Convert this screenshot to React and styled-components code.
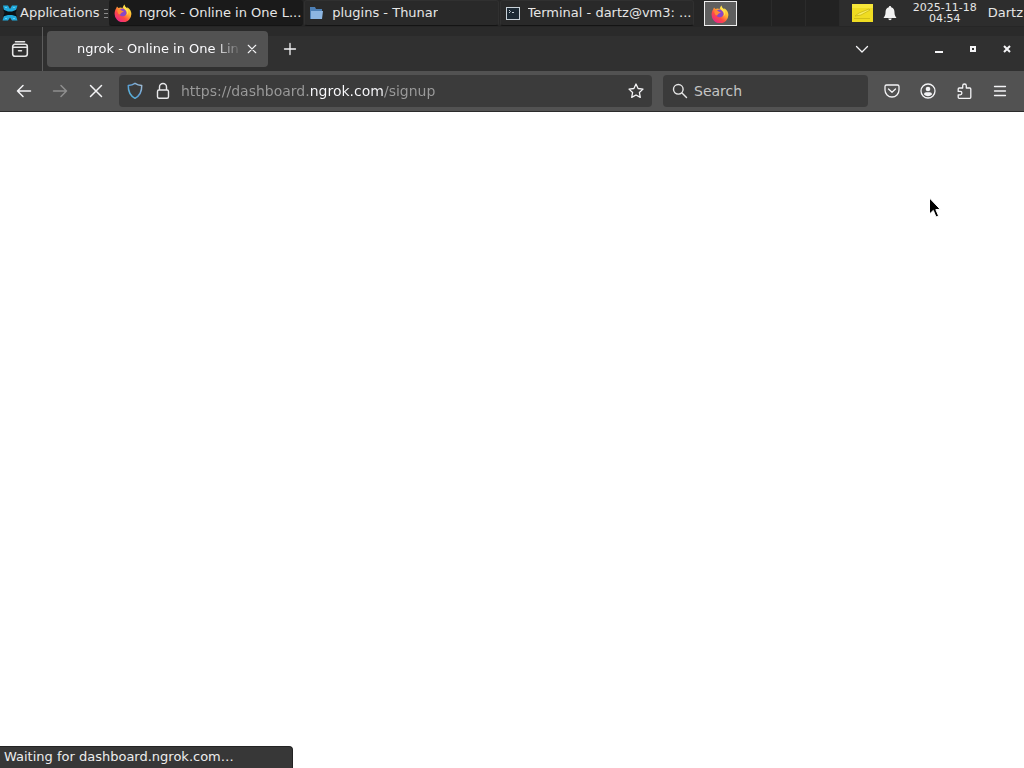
import React, { useId, useState } from 'react';
import styled, { createGlobalStyle, css } from 'styled-components';

const GlobalStyle = createGlobalStyle`
  *, *::before, *::after { box-sizing: border-box; }
  body { margin: 0; background: #fff; }
  button, input { font: inherit; color: inherit; }
`;

const Desktop = styled.div`
  display: flex;
  flex-direction: column;
  min-height: 100vh;
  overflow: hidden;
  font-family: 'DejaVu Sans', sans-serif;
  font-size: 13px;
  line-height: 16px;
  color: #e6e6e6;
`;

const Plain = styled.button`
  display: flex;
  align-items: center;
  flex: none;
  margin: 0;
  padding: 0;
  border: 0;
  background: none;
  white-space: nowrap;
`;

/* Desktop panel */
const Panel = styled.header`
  display: flex;
  height: 27px;
  background: #262626;
`;

const AppsButton = styled(Plain)`
  gap: 2px;
  width: 109px;
  height: 26px;
  padding-left: 2px;
  background: #2d2d2d;
`;

const Handle = styled.span`
  width: 4px;
  height: 9px;
  margin-left: 3px;
  background: repeating-linear-gradient(#8a8a8a 0 1px, transparent 1px 4px);
`;

const TaskList = styled.nav`
  display: flex;
  flex: 1;
  gap: 1px;
  min-width: 0;
  padding-right: 10px;
`;

const Task = styled(Plain)`
  flex: 1;
  gap: 7px;
  min-width: 0;
  height: 26px;
  padding: 0 0 0 4px;
  border: 1px solid ${(p) => (p.$active ? '#1a1a1a' : '#303030')};
  border-bottom-color: #141414;
  border-radius: 3px;
  background: ${(p) => (p.$active ? '#1a1a1a' : '#292929')};
`;

const TaskLabel = styled.span`
  overflow: hidden;
`;

const Pager = styled.div`
  display: flex;
  height: 26px;
`;

const Workspace = styled(Plain)`
  justify-content: center;
  width: 34px;
  height: 26px;
  border-right: 1px solid #2b2b2b;
  background: #222;
  ${(p) =>
    p.$current &&
    css`
      width: 33px;
      height: 25px;
      margin: 1px 1px 0 0;
      border: 1px solid #f0f0f0;
      background: #5f5f5f;
    `}
`;

const Tray = styled.div`
  display: flex;
  align-items: center;
  height: 26px;
  padding: 0 1px 0 12px;
  background: #2d2d2d;
`;

const Clock = styled.time`
  width: 70px;
  margin: 0 8px 0 12px;
  font-size: 11px;
  line-height: 11px;
  text-align: center;
`;

const NotifyButton = styled(Plain)`
  margin-left: 9px;
`;

/* Browser window */
const TabStrip = styled.div`
  display: flex;
  align-items: center;
  height: 44px;
  background: linear-gradient(#2a2a2a 0 9px, #303030 9px);
`;

const ViewButton = styled(Plain)`
  justify-content: center;
  width: 43px;
  height: 44px;
  padding-right: 3px;
  border-right: 1px solid #5c5c5c;
`;

const Tab = styled.div`
  display: flex;
  align-items: center;
  width: 221px;
  height: 36px;
  margin-left: 4px;
  padding: 0 6px 0 30px;
  border-radius: 4px;
  background: #525252;
  color: #fbfbfe;
`;

const TabTitle = styled.span`
  flex: 1;
  overflow: hidden;
  white-space: nowrap;
  mask-image: linear-gradient(to left, transparent, #000 28px);
`;

const ToolButton = styled(Plain)`
  justify-content: center;
  width: ${(p) => p.$width || 36}px;
  height: 32px;
  color: ${(p) => (p.disabled ? '#8f8f8f' : '#f4f4f6')};
`;

const NewTabButton = styled(ToolButton)`
  margin-left: 4px;
`;

const WindowControls = styled.div`
  display: flex;
  margin-left: auto;
`;

const ListTabs = styled(ToolButton)`
  margin-right: 42px;
`;

const NavBar = styled.div`
  display: flex;
  align-items: center;
  height: 41px;
  padding: 0 6px;
  border-bottom: 1px solid #2b2b2b;
  background: #525252;
`;

const Field = styled.div`
  display: flex;
  align-items: center;
  height: 32px;
  border-radius: 4px;
  background: #3b3b3b;
  font-size: 14px;
`;

const AddressField = styled(Field)`
  flex: 1;
  min-width: 0;
  margin-left: 5px;
  padding-left: 2px;
`;

const SearchField = styled(Field)`
  flex: 0 1 205px;
  gap: 6px;
  min-width: 0;
  margin: 0 6px 0 11px;
  padding-left: 9px;
`;

const TextInput = styled.input`
  flex: 1;
  min-width: 0;
  height: 24px;
  padding: 0;
  border: 0;
  outline: 0;
  background: none;
  &::placeholder {
    color: #c4c4c4;
    opacity: 1;
  }
`;

const AddressInput = styled(TextInput)`
  margin-left: 4px;
  color: transparent;
  caret-color: #fff;
  background: linear-gradient(90deg, #9b9b9b 129px, #fbfbfe 129px 203px, #9b9b9b 203px);
  background-clip: text;
  -webkit-background-clip: text;
`;

const Page = styled.main`
  flex: 1;
  display: flex;
  align-items: flex-end;
  background: #fff;
`;

const StatusBar = styled.div`
  width: 293px;
  height: 22px;
  padding: 2px 4px;
  border-top: 1px solid #232323;
  border-right: 1px solid #232323;
  border-radius: 0 4px 0 0;
  background: #373737;
  color: #ededed;
`;

const Pointer = styled.svg`
  position: absolute;
  left: 928px;
  top: 197px;
  pointer-events: none;
`;

const Icon = ({ size = 16, children, width = 1.3 }) => (
  <svg
    width={size}
    height={size}
    viewBox="0 0 16 16"
    fill="none"
    stroke="currentColor"
    strokeWidth={width}
    strokeLinecap="round"
    strokeLinejoin="round"
    aria-hidden="true"
  >
    {children}
  </svg>
);

function FirefoxLogo({ size = 18 }) {
  const id = useId();
  return (
    <svg width={size} height={size} viewBox="0 0 18 18" aria-hidden="true">
      <defs>
        <linearGradient id={`${id}b`} x1="0.85" y1="0.1" x2="0.2" y2="0.95">
          <stop offset="0" stopColor="#fff04a" />
          <stop offset="0.35" stopColor="#ffb02f" />
          <stop offset="0.65" stopColor="#ff4a45" />
          <stop offset="1" stopColor="#e7268b" />
        </linearGradient>
      </defs>
      <path
        d="M2.2 4.2 3 2.5l1.4 1.6 2-.5L8.5 4 10.3.6c.3 1.8 1.5 2.7 2.8 4l.3-1.4c2.6 1.8 4 4.2 4 6.8A8.4 8.4 0 0 1 .6 9.8c0-2 .5-4 1.6-5.6Z"
        fill={`url(#${id}b)`}
      />
      <path d="M6 5.500c2-1.500 4.500-1 5.800.8 1.400 1.900.9 4.400-.9 5.500-2 1.200-5 .4-5.700-1.800C4.800 8.500 5 6.500 6 5.500Z" fill="#8a46c8" />
      <path d="M3.500 5.800c1.800-.8 3.300-.3 4.400 1l1.900.4C9 8.300 7.500 8.200 7 9.200c-.5 1.200-1.600 1.600-2.500.8-.8-1-1.200-2.700-1-4.200Z" fill="#ff8a34" />
      <path d="M10.300.6c-1.400 2.400-1 4 1 5.400 1.800 1.300 2.300 3.300 1.200 5.400 2-1.400 2.400-4 .6-6.800-1.300-1.300-2.500-2.200-2.800-4Z" fill="#ffe04b" />
    </svg>
  );
}

const XfceLogo = () => (
  <svg width="16" height="18" viewBox="0 0 16 18" aria-hidden="true">
    <path d="M1 1.500h5L8 5l2-3.500h5.500L14 6l-2.500 3 2.500 3 1.500 4.500H10L8 13.500l-2 3H.5L2 12l2.500-3L2 6Z" fill="#20a9dc" />
    <path d="M1 5.500 6 7.500h4l5-2-1.500 3.500 1.500 3.500-5-1.500H6l-5 1.500L2.500 9Z" fill="#0a1216" />
    <path d="M3 3.500h2M11 3.500h2M3 14.500h2M11 14.500h2" stroke="#5fcdf0" />
  </svg>
);

const FolderIcon = () => (
  <svg width="16" height="16" viewBox="0 0 16 16" aria-hidden="true">
    <path d="M1 2h5l1 2h6v3H3l-1 7H1Z" fill="#4d7fb5" />
    <path d="M2 6h12l-1 8H2Z" fill="#8db6e2" />
  </svg>
);

const TerminalIcon = () => (
  <svg width="16" height="16" viewBox="0 0 16 16" fill="none" aria-hidden="true">
    <rect x="1.500" y="2.500" width="13" height="12" fill="#1d2a35" stroke="#c9d2d9" />
    <path d="m4 5 1.500 1.500L4 8M7 7.500h2" stroke="#c9d2d9" />
  </svg>
);

const NoteIcon = () => (
  <svg width="21" height="18" viewBox="0 0 21 18" aria-hidden="true">
    <path d="M0 0h21v18H0Z" fill="#efdc22" />
    <path d="M0 0h21v4H0Z" fill="#f7e73a" />
    <path d="m3 12 4-3 10-4 1 1-9 5ZM2 14.500h16" fill="#f8ec62" stroke="#c9b714" strokeWidth="0.8" />
  </svg>
);

const BellIcon = () => (
  <svg width="16" height="16" viewBox="0 0 16 16" fill="#f2f2f2" aria-hidden="true">
    <path d="M8 1c.8 0 1 .5 1.200 1.200C11.800 3 12.500 5 12.500 7.500c0 2.500.8 3.500 2 5.500h-13c1.200-2 2-3 2-5.500C3.500 5 4.200 3 6.800 2.200 7 1.500 7.200 1 8 1ZM6.300 13.500h3.400a1.700 1.700 0 0 1-3.400 0Z" />
  </svg>
);

const ShieldIcon = () => {
  const id = useId();
  return (
    <svg width="16" height="18" viewBox="0 0 16 18" fill="none" aria-hidden="true">
      <defs>
        <linearGradient id={id} x1="0" y1="1" x2="1" y2="0">
          <stop offset="0" stopColor="#56b9d8" />
          <stop offset="0.5" stopColor="#5d9fd8" />
          <stop offset="1" stopColor="#a8bfd2" />
        </linearGradient>
      </defs>
      <path d="M8 1.300c2 1.300 4.200 2 6.700 2.200.2 5.500-1.500 10-6.700 12.800C2.800 13.500 1.100 9 1.300 3.500 3.800 3.300 6 2.600 8 1.300Z" stroke={`url(#${id})`} strokeWidth="1.500" strokeLinejoin="round" />
    </svg>
  );
};

const LockIcon = () => (
  <svg width="16" height="18" viewBox="0 0 16 18" fill="none" stroke="#e8e8ea" strokeWidth="1.400" aria-hidden="true">
    <rect x="2.500" y="8" width="11" height="8.300" rx="1.500" />
    <path d="M4.500 8V5a3.500 3.500 0 0 1 7 0v3" />
  </svg>
);

const TASKS = [
  { label: 'ngrok - Online in One L...', icon: <FirefoxLogo />, active: true },
  { label: 'plugins - Thunar', icon: <FolderIcon /> },
  { label: 'Terminal - dartz@vm3: ...', icon: <TerminalIcon /> },
];

export default function App() {
  const [url, setUrl] = useState('https://dashboard.ngrok.com/signup');
  return (
    <Desktop>
      <GlobalStyle />
      <Panel>
        <AppsButton>
          <XfceLogo />
          Applications
          <Handle />
        </AppsButton>
        <TaskList aria-label="Windows">
          {TASKS.map((task) => (
            <Task key={task.label} $active={task.active}>
              {task.icon}
              <TaskLabel>{task.label}</TaskLabel>
            </Task>
          ))}
        </TaskList>
        <Pager>
          <Workspace $current aria-label="Workspace 1"><FirefoxLogo /></Workspace>
          <Workspace aria-label="Workspace 2" />
          <Workspace aria-label="Workspace 3" />
          <Workspace aria-label="Workspace 4" />
        </Pager>
        <Tray>
          <Plain aria-label="Notes"><NoteIcon /></Plain>
          <NotifyButton aria-label="Notifications"><BellIcon /></NotifyButton>
          <Clock dateTime="2025-11-18T04:54">2025-11-18<br />04:54</Clock>
          <Plain>Dartz</Plain>
        </Tray>
      </Panel>

      <TabStrip>
        <ViewButton aria-label="Firefox View">
          <Icon size={18} width={1.4}>
            <path d="M4 1.500h8M1.500 6.500v-.7a2 2 0 0 1 2-2h9a2 2 0 0 1 2 2v.7M1.500 6.500h13v6a2 2 0 0 1-2 2h-9a2 2 0 0 1-2-2ZM6.700 9.500h2.600" />
          </Icon>
        </ViewButton>
        <Tab>
          <TabTitle>ngrok - Online in One Lin</TabTitle>
          <ToolButton $width={20} aria-label="Close tab">
            <Icon size={12} width={1.5}><path d="m3 3 10 10M13 3 3 13" /></Icon>
          </ToolButton>
        </Tab>
        <NewTabButton aria-label="New tab">
          <Icon><path d="M8 2.500v11M2.500 8h11" /></Icon>
        </NewTabButton>
        <WindowControls>
          <ListTabs aria-label="List all tabs">
            <Icon><path d="m2.500 5.500 5.500 5.500 5.500-5.500" /></Icon>
          </ListTabs>
          <ToolButton $width={34} aria-label="Minimize">
            <svg width="8" height="8" viewBox="0 0 8 8"><path d="M0 6h8v2H0Z" fill="currentColor" /></svg>
          </ToolButton>
          <ToolButton $width={34} aria-label="Maximize">
            <svg width="6" height="6" viewBox="0 0 6 6"><path d="M1 1h4v4H1Z" fill="none" stroke="currentColor" strokeWidth="2" /></svg>
          </ToolButton>
          <ToolButton $width={34} aria-label="Close window">
            <svg width="8" height="8" viewBox="0 0 8 8"><path d="m1 1 6 6M7 1 1 7" stroke="currentColor" strokeWidth="2" /></svg>
          </ToolButton>
        </WindowControls>
      </TabStrip>

      <NavBar>
        <ToolButton aria-label="Back"><Icon width={1.5}><path d="M14.500 8h-13M7 2.500 1.500 8 7 13.500" /></Icon></ToolButton>
        <ToolButton aria-label="Forward" disabled><Icon width={1.5}><path d="M1.500 8h13M9 2.500l5.500 5.500L9 13.500" /></Icon></ToolButton>
        <ToolButton aria-label="Stop"><Icon width={1.5}><path d="m2.500 2.500 11 11M13.500 2.500l-11 11" /></Icon></ToolButton>
        <AddressField>
          <ToolButton $width={28} aria-label="Tracking protection"><ShieldIcon /></ToolButton>
          <ToolButton $width={28} aria-label="Site information"><LockIcon /></ToolButton>
          <AddressInput aria-label="Address" value={url} onChange={(e) => setUrl(e.target.value)} />
          <ToolButton $width={32} aria-label="Bookmark this page">
            <Icon><path d="m8 1 2.100 4.500 4.900.6-3.600 3.400.9 4.900L8 12l-4.300 2.400.9-4.900L1 6.100l4.900-.6Z" /></Icon>
          </ToolButton>
        </AddressField>
        <SearchField>
          <Icon width={1.4}><circle cx="6.300" cy="6.300" r="4.800" /><path d="m10 10 4.500 4.500" /></Icon>
          <TextInput aria-label="Search" placeholder="Search" />
        </SearchField>
        <ToolButton aria-label="Save to Pocket">
          <Icon><path d="M2.500 2h11a1.500 1.500 0 0 1 1.500 1.500V7A7 7 0 0 1 1 7V3.500A1.500 1.500 0 0 1 2.500 2ZM4.500 6 8 9.200 11.500 6" /></Icon>
        </ToolButton>
        <ToolButton aria-label="Account">
          <Icon>
            <circle cx="8" cy="8" r="7" />
            <circle cx="8" cy="6" r="2.300" fill="currentColor" stroke="none" />
            <path d="M4 11.500c0-1.500 1-2.300 2.200-2.300h3.600c1.200 0 2.200.8 2.200 2.300a5.500 5.500 0 0 1-8 0Z" fill="currentColor" stroke="none" />
          </Icon>
        </ToolButton>
        <ToolButton aria-label="Extensions">
          <Icon><path d="M6.700 5V2.800a1.800 1.800 0 0 1 3.600 0V5h3.500a1 1 0 0 1 1 1v8.300a1 1 0 0 1-1 1H3.200a1 1 0 0 1-1-1v-2.500h2a1.700 1.700 0 0 0 0-3.400h-2V6a1 1 0 0 1 1-1Z" /></Icon>
        </ToolButton>
        <ToolButton aria-label="Menu"><Icon><path d="M2.500 3.500h11M2.500 8h11M2.500 12.500h11" /></Icon></ToolButton>
      </NavBar>

      <Page>
        <StatusBar role="status">Waiting for dashboard.ngrok.com…</StatusBar>
      </Page>

      <Pointer width="14" height="22" viewBox="0 0 14 22" aria-hidden="true">
        <path d="M1.500 1v16l3.800-3.600L8 20l2.600-1.100-2.800-6.300 4.400-.3Z" fill="#000" stroke="#fff" />
      </Pointer>
    </Desktop>
  );
}
